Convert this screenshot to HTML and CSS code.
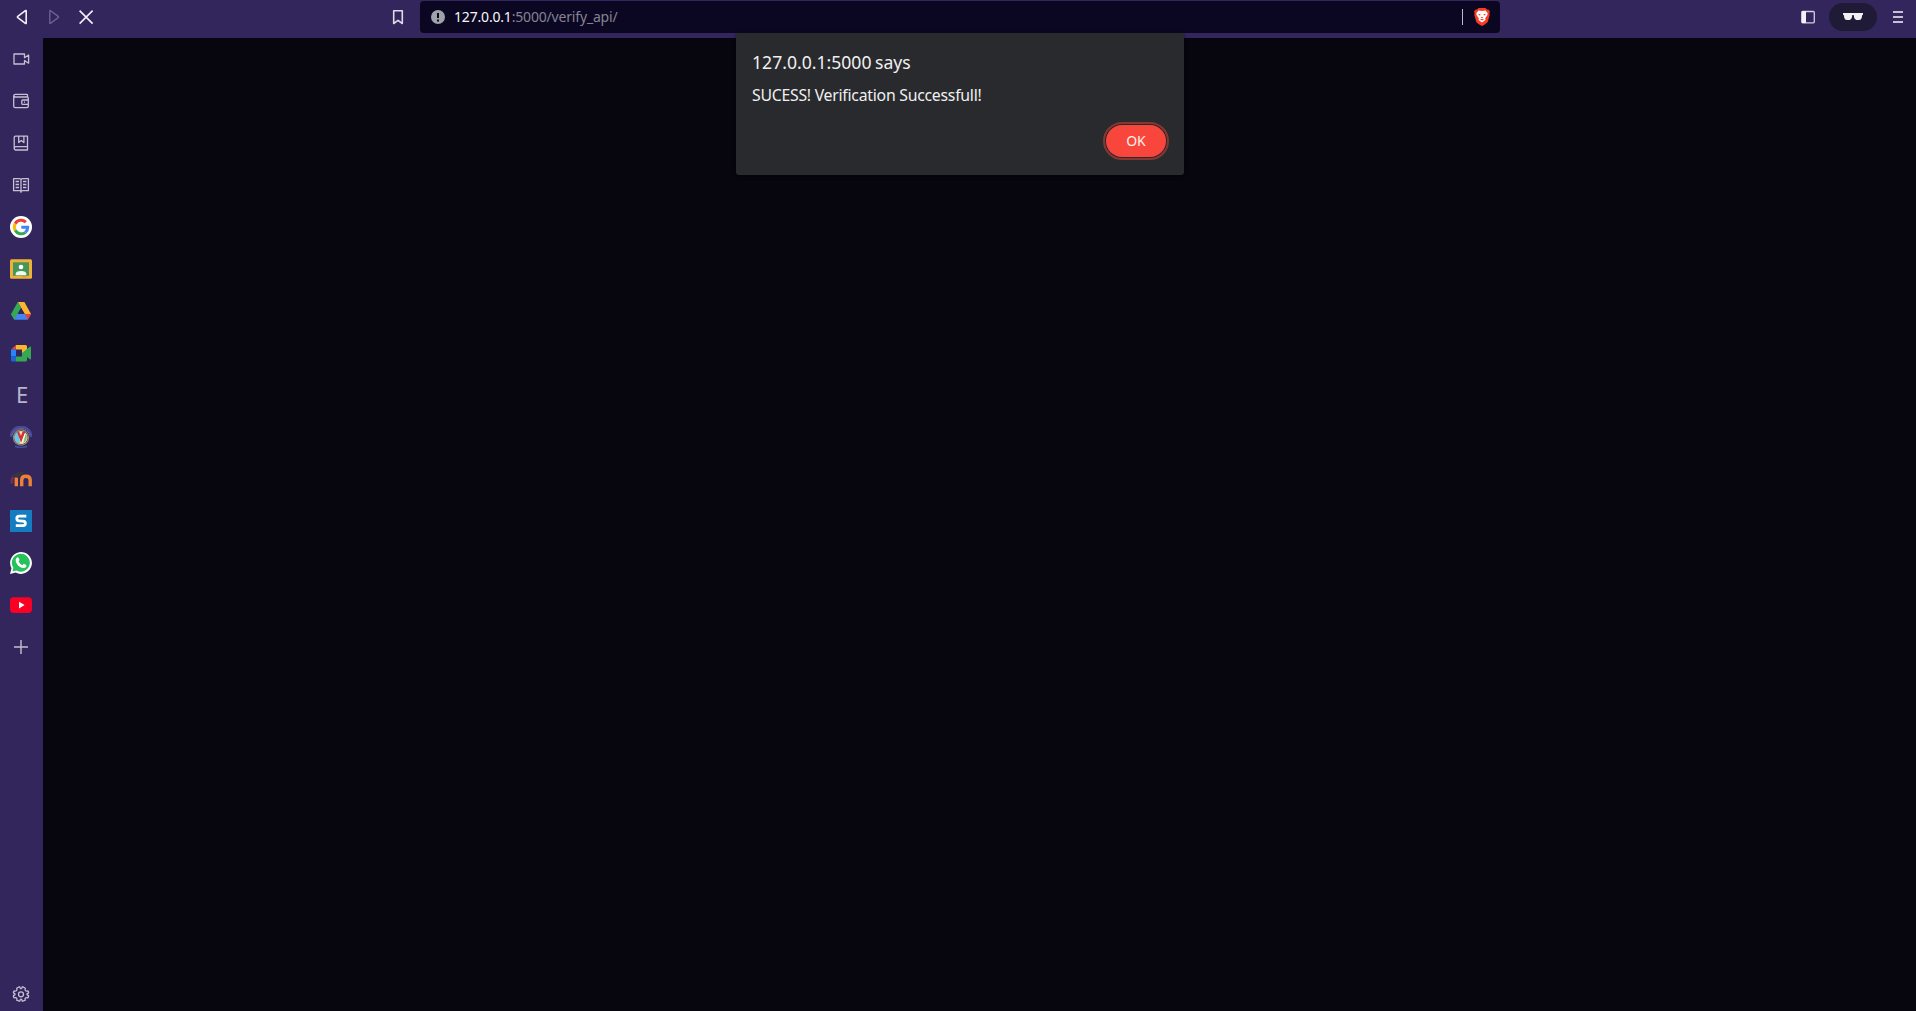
FILE: index.html
```html
<!DOCTYPE html>
<html lang="en">
<head>
<meta charset="utf-8">
<title>127.0.0.1:5000/verify_api/</title>
<link rel="stylesheet" href="styles.css">
</head>
<body>
<header class="toolbar">
  <nav class="navigation">
    <svg class="icon bright" viewBox="0 0 24 24"><path d="M16.2 6.1v11.8q0 .9-.8.4L7.8 12.6q-.7-.6 0-1.2l7.6-5.7q.8-.5.8.4z"/></svg>
    <svg class="icon disabled" viewBox="0 0 24 24"><path d="M7.8 6.1v11.8q0 .9.8.4l7.6-5.7q.7-.6 0-1.2L8.6 5.7q-.8-.5-.8.4z"/></svg>
    <svg class="icon bright" viewBox="0 0 24 24"><path d="m5.6 5.6 13 13m0-13-13 13"/></svg>
  </nav>
  <svg class="icon bookmark" viewBox="0 0 24 24"><path d="M7.7 5.8h8.6v12.7L12 15.4l-4.3 3.1z"/></svg>
  <div class="address">
    <svg class="info" viewBox="0 0 14 14"><circle cx="7" cy="7" r="7" fill="#9da3a9"/><path d="M7 3v5M7 9.600v1.800" stroke="#0b0722" stroke-width="2"/></svg>
    <span class="url"><b>127.0.0.1</b>:5000/verify_api/</span>
    <i class="separator"></i>
    <svg class="shield" viewBox="0 0 16 18"><path d="M4.500 0h7l1.500 1.600 1.700.2 1.300 2-.6 1.500.3 1.400-1.900 7Q13.300 15 8 18 2.700 15 2.200 13.700L.3 6.700.6 5.300 0 3.800l1.300-2L3 1.600z" fill="#f63c21"/><path d="M4.500 2.500 8 3l3.500-.5 2.200 2.700-.5 2.300-2 2.800.3 1.600L8 14.500l-3.500-2.600.3-1.600-2-2.800-.5-2.300z" fill="#fff"/><path d="m4.300 5.800 2.400.7-.7 1.100-1.200-.5zm7.400 0-2.400.7.700 1.100 1.200-.5zM6.500 9.100h3L8 10.200zM5.800 11.200 8 10.900l2.200.3L8 12.500z" fill="#f63c21"/></svg>
  </div>
  <div class="actions">
    <svg class="icon panel" viewBox="0 0 24 24"><rect x="5.700" y="6.500" width="12.600" height="11.300" rx="1"/><path d="M6 6h4v12H6z" fill="#f3f1f7" stroke="none"/></svg>
    <span class="private"><svg viewBox="0 0 20 7"><path d="M0 0h20v1.700l-.8.4-.4 2.400Q18.400 7 16 7h-1.500q-2.800 0-3.400-2.800L10.700 2H9.300l-.4 2.200Q8.300 7 5.500 7H4Q1.600 7 1.200 4.500L.8 2.100 0 1.700z" fill="#f1f1f3"/></svg></span>
    <svg class="icon menu" viewBox="0 0 24 24"><path d="M7 7h10M7 12h10M7 17h10"/></svg>
  </div>
</header>
<div class="workspace">
  <aside class="sidebar">
    <a><svg class="icon" viewBox="0 0 24 24"><path d="M5 7h10.500v3.700L19.600 8v8.200l-4.100-2.700V17H5z"/></svg></a>
    <a><svg class="icon" viewBox="0 0 24 24"><path d="M18.500 8.500V6q0-.7-.7-.7H6.400Q4.700 5.300 4.700 7v10q0 1.600 1.600 1.600h11.600q1.400 0 1.400-1.400V9.200q0-1.200-1.200-1.200H6.400q-1.300 0-1.500-1M19.300 11h-5.500q-1 0-1 1v2.400q0 1 1 1h5.500M15 13.200h1"/></svg></a>
    <a><svg class="icon" viewBox="0 0 24 24"><path d="M18.500 15.600V5.200H6.600q-1.400 0-1.400 1.400v11q0 1.400 1.400 1.400h12.300M5.300 17q.3-1.300 1.600-1.300h11.600v3.100M9.700 5.300v6.200l2.600-2 2.600 2V5.300"/></svg></a>
    <a><svg class="icon" viewBox="0 0 24 24"><path d="M4.600 5.700h5.800q1.600 0 1.600 1.200 0-1.200 1.600-1.200h5.800v12h-6q-1.400 0-1.400 1.600 0-1.600-1.400-1.600h-6zM12 7v12M6.600 8.500H10M6.600 11.500H10M6.600 14.500H10M14 8.500h3.400M14 11.500h3.400M14 14.500h3.400"/></svg></a>
    <a><svg class="app" viewBox="0 0 22 22"><circle cx="11" cy="11" r="11" fill="#fff"/><g fill="none" stroke-width="3"><path d="M15.800 6.100A6.700 6.700 0 0 0 5.200 7.700" stroke="#ea4335"/><path d="M5.200 7.700a6.700 6.700 0 0 0 0 6.600" stroke="#fbbc05"/><path d="M5.200 14.300a6.700 6.700 0 0 0 10.200 2" stroke="#34a853"/><path d="M15.400 16.300q2.400-2 2.300-5H11.300" stroke="#4285f4"/></g></svg></a>
    <a><svg class="app" viewBox="0 0 22 22"><rect y="1.300" width="22" height="19.500" rx="1.500" fill="#f0b13a"/><path d="M3 4.300h16v13.500H3z" fill="#469659"/><circle cx="11" cy="9" r="2.300" fill="#fff"/><path d="M5.700 16q0-3 5.300-3.100 5.300.1 5.300 3.100v1.300H5.700z" fill="#f1f8f2"/><path d="M12 17.800h5v1.400h-5z" fill="#dba021"/></svg></a>
    <a><svg class="app" viewBox="0 0 22 22"><path d="M7.800 2h6.600L21 14h-6.300z" fill="#fbb52f"/><path d="M1 14h20l-3.200 5.800H4.300z" fill="#4285f4"/><path d="M14.700 14H21l-3.200 5.800z" fill="#ea4335"/><path d="M7.600 14h7L11.100 8z" fill="#33265d"/><path d="M7.800 2 11 7.700 7.500 14 4.300 19.800 1 14z" fill="#34a853"/></svg></a>
    <a><svg class="app" viewBox="0 0 22 22"><path d="M1 7.500 6 3v4.500z" fill="#ea4335"/><path d="M1 7.500h5v7H1z" fill="#2684fc"/><path d="M1 14.500h5v5H2.500Q1 19.500 1 18z" fill="#1769d2"/><path d="M6 3h9.500Q17 3 17 4.500V11h-5V7.500H6z" fill="#fbb52f"/><path d="M6 14.500h6V11h5v7q0 1.500-1.500 1.500H6z" fill="#34a853"/><path d="m12 11 7.800-6.200q1.200-.6 1.200.6v11.200q0 1.200-1.200.6z" fill="#34a853"/></svg></a>
    <a class="letter">E</a>
    <a><svg class="app" viewBox="0 0 22 22"><path d="M1 11A10 10 0 0 1 21 11" fill="none" stroke="#454a99" stroke-width="3"/><path d="M2 9A9.500 9.500 0 0 1 20 9" fill="none" stroke="#9a90a5" stroke-width="1" stroke-dasharray="1 1"/><circle cx="11" cy="11.500" r="7.600" fill="#282657" stroke="#a4806a" stroke-width="1.200"/><circle cx="11" cy="11.500" r="6.600" fill="#eee2ad"/><path d="M9 5.200a6.400 6.400 0 0 0 1 12.500z" fill="#69c8df"/><path d="M15.500 7.500q3 4-1 9l-1 .8z" fill="#78bd76"/><path d="M7 5.700h2l2 4 1.500-4h2.800l-4.200 11z" fill="#d72f3c"/><path d="M12 16.500 15 8" stroke="#fff" stroke-width="1"/><path d="M5 19.300q6 2.700 12 0v1.900q-6 2-12 0z" fill="#454a99"/></svg></a>
    <a><svg class="app" viewBox="0 0 22 22"><path d="M6.300 18.300V9.500M11.700 18.300V12q0-3.700 4.200-3.700t4.300 3.700v6.300" fill="none" stroke="#ed8037" stroke-width="3.400"/><path d="m2 7 6-3h6l-3 4-4 1.600L5.700 8 2 9z" fill="#3a353d"/><path d="M2.500 8.500Q.3 12 1.500 16M4 9.500Q1.500 12 3 15" fill="none" stroke="#71344e" stroke-width="1.200"/></svg></a>
    <a><svg class="app" viewBox="0 0 22 22"><path d="M0 0h22v22H0z" fill="#147dc2"/><path d="M16.300 6.200H9.200q-2.400 0-2.400 2.200t2.400 2.400l3.800.4q2.400.2 2.400 2.300t-2.400 2.200H5.800" fill="none" stroke="#fff" stroke-width="2.800"/></svg></a>
    <a><svg class="app" viewBox="0 0 22 22"><path d="m0 22 1.500-5.700A10.900 10.900 0 1 1 5.700 20.500z" fill="#fff"/><path d="m2.400 19.500 1-3.700A9 9 0 1 1 6.300 18.500z" fill="#25c15a"/><path d="M6.500 6q1.500-1.300 2.200.1l.8 2-.9 1.500q1 2.500 3.700 3.600l1.400-1.500 2.600 1.200q.7 2.700-2.900 3.200Q8 15.900 5.800 9.600 5.200 7.300 6.500 6z" fill="#fff"/></svg></a>
    <a><svg class="app" viewBox="0 0 22 22"><rect y="3.300" width="22" height="15.600" rx="3.600" fill="#f90025"/><path d="m9 7.800 5.600 3.300L9 14.400z" fill="#fff"/></svg></a>
    <a><svg class="icon add" viewBox="0 0 24 24"><path d="M12 5v14M5 12h14"/></svg></a>
    <a class="settings"><svg class="icon" viewBox="0 0 24 24"><path d="M9.800 5h1.100q.2 1.800 1.100 1.800T13.100 5h1.100l2.100 1.200q-.7 2 .3 2.500.8.600 2.200.1l.7 1v1.300q-1.600.2-1.600 1.200t1.600 1.200v1.300l-.7 1q-1.400-.5-2.200.1-1 .5-.3 2.300L14.200 19h-1.100q-.2-1.800-1.100-1.800T10.900 19H9.800l-2.100-.8q.7-1.800-.3-2.300-.8-.6-2.200-.1l-.7-1v-1.300q1.600-.2 1.600-1.200t-1.600-1.200V9.800l.7-1q1.400.5 2.200-.1 1-.5.300-2.500z"/><circle cx="12" cy="12.300" r="2.500"/></svg></a>
  </aside>
  <main class="page"></main>
</div>
<section class="dialog" role="dialog">
  <h1>127.0.0.1:5000 says</h1>
  <p>SUCESS! Verification Successfull!</p>
  <button>OK</button>
</section>
</body>
</html>
```
FILE: styles.css
```css
* { box-sizing: border-box; }
body {
  margin: 0;
  height: 100vh;
  display: flex;
  flex-direction: column;
  overflow: hidden;
  background: #07050e;
  font-family: "Noto Sans", sans-serif;
}
svg { display: block; flex: none; }
.toolbar {
  display: flex;
  align-items: flex-start;
  height: 38px;
  flex: none;
  background: #33265d;
}
.icon {
  width: 24px;
  height: 24px;
  fill: none;
  stroke: #c5c0d2;
  stroke-width: 1.3;
  stroke-linejoin: round;
}
.bright { stroke: #f2eff8; stroke-width: 1.6; }
.disabled { stroke: #6d6190; stroke-width: 1.4; }
.navigation {
  display: flex;
  gap: 8px;
  width: 386px;
  padding: 5px 0 0 10px;
}
.bookmark { margin: 5px 10px 0 0; stroke: #dedae6; stroke-width: 1.6; }
.address {
  display: flex;
  align-items: center;
  width: 1080px;
  height: 32px;
  margin-top: 1px;
  padding: 0 10px 0 11px;
  border-radius: 4px;
  background: #0b0722;
}
.info { width: 14px; height: 14px; }
.url {
  flex: 1;
  margin-left: 9px;
  font-size: 14px;
  line-height: 20px;
  letter-spacing: -0.18px;
  color: #858392;
}
.url b { font-weight: 400; color: #f7f7fa; }
.separator { width: 1px; height: 16px; background: #bdbbc5; }
.shield { width: 16px; height: 18px; margin-left: 11px; }
.actions { display: flex; align-items: center; height: 34px; margin-left: 296px; }
.panel { stroke: #d4cfdd; }
.private {
  display: flex;
  align-items: center;
  justify-content: center;
  width: 48px;
  height: 28px;
  margin: 0 9px;
  border-radius: 14px;
  background: #1f1a36;
}
.private svg { width: 20px; height: 7px; margin-top: -1px; }
.menu { stroke-width: 1.8; }
.workspace { display: flex; flex: 1; }
.sidebar {
  display: flex;
  flex-direction: column;
  width: 43px;
  padding-right: 1px;
  background: #33265d;
}
.sidebar a {
  display: flex;
  align-items: center;
  justify-content: center;
  height: 42px;
}
.sidebar .settings { margin-top: auto; height: 34px; }
.app { width: 22px; height: 22px; }
.add { stroke-width: 1.4; }
.sidebar .letter {
  padding: 0 0 2px 2px;
  font-size: 22px;
  font-weight: 400;
  color: #b9b4c8;
}
.page { flex: 1; background: #07050e; }
.dialog {
  position: absolute;
  left: 736px;
  top: 33px;
  display: flex;
  flex-direction: column;
  width: 448px;
  height: 142px;
  padding: 17px 18px 18px 16px;
  border-radius: 3px;
  background: #292a2d;
  box-shadow: 0 1px 4px #0008;
  color: #f0f0f1;
}
.dialog h1 { margin: 0; font-size: 17.6px; line-height: 24px; font-weight: 400; word-spacing: -1px; }
.dialog p { margin: 10px 0 0; font-size: 15.8px; line-height: 22px; letter-spacing: -0.25px; }
.dialog button {
  align-self: flex-end;
  width: 60px;
  height: 32px;
  margin-top: auto;
  padding: 0 0 2px;
  border: 0;
  border-radius: 16px;
  outline: 2px solid #873632;
  outline-offset: 1px;
  background: #f9463c;
  color: #fff0ed;
  font: 14px "Noto Sans", sans-serif;
}
```
